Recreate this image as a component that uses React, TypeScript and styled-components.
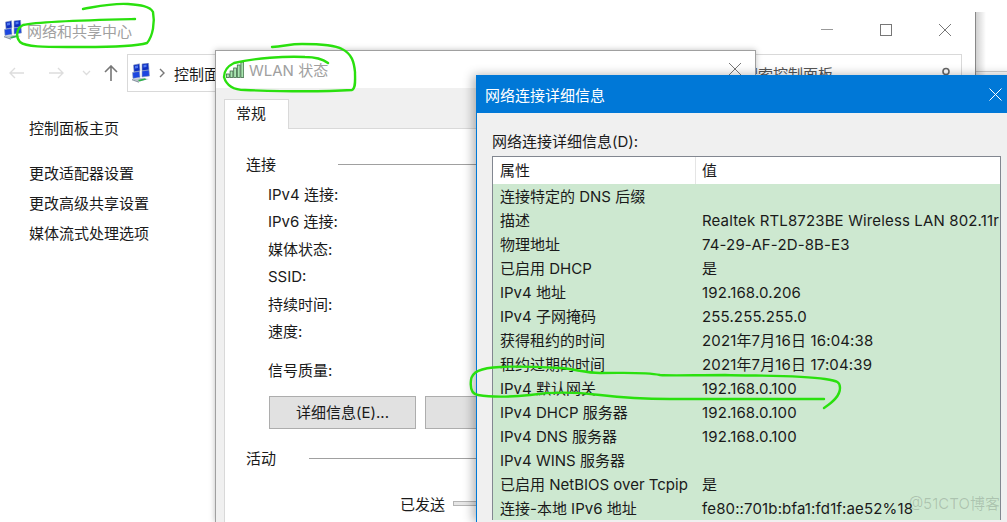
import React from "react";
import styled, { createGlobalStyle } from "styled-components";

const FONT = `Inter, "Noto Sans CJK SC", sans-serif`;

const rows: [string, string][] = [
  ["连接特定的 DNS 后缀", ""],
  ["描述", "Realtek RTL8723BE Wireless LAN 802.11r"],
  ["物理地址", "74-29-AF-2D-8B-E3"],
  ["已启用 DHCP", "是"],
  ["IPv4 地址", "192.168.0.206"],
  ["IPv4 子网掩码", "255.255.255.0"],
  ["获得租约的时间", "2021年7月16日 16:04:38"],
  ["租约过期的时间", "2021年7月16日 17:04:39"],
  ["IPv4 默认网关", "192.168.0.100"],
  ["IPv4 DHCP 服务器", "192.168.0.100"],
  ["IPv4 DNS 服务器", "192.168.0.100"],
  ["IPv4 WINS 服务器", ""],
  ["已启用 NetBIOS over Tcpip", "是"],
  ["连接-本地 IPv6 地址", "fe80::701b:bfa1:fd1f:ae52%18"],
];

// four blue screens on a grey and green base
const NetworkIcon = () => (
  <svg width="18" height="20" viewBox="0 0 18 20">
    <path d="M2 9L1.500 2l6-1.200.5 7z" fill="#0f2fc0" stroke="#8fa0c0" strokeWidth=".6" />
    <path d="M10 7.800V.9L16.500 0l.5 7z" fill="#0f2fc0" stroke="#8fa0c0" strokeWidth=".6" />
    <path d="M1 15.500L.5 9.500l7-1.200.5 6z" fill="#1c46e0" stroke="#8fa0c0" strokeWidth=".6" />
    <path d="M10 14V8l7-1 .5 6z" fill="#1c46e0" stroke="#8fa0c0" strokeWidth=".6" />
    <path d="M3 3l3-.6v2.500L3 5.600z" fill="#4f78f0" />
    <path d="M11.500 2l3-.5V4l-3 .5z" fill="#4f78f0" />
    <path d="M0 16l7 2.500 10-2.500-8-1z" fill="#b9c2cc" />
    <path d="M6 17l7-1.700 1.500 1.200-7 2z" fill="#2fb24a" />
    <path d="M0 16l7 2.500v1.200L0 17.200z" fill="#8b96a3" />
  </svg>
);

const SignalIcon = () => (
  <svg width="18" height="16" viewBox="0 0 18 16">
    {[0, 1, 2, 3, 4].map((i) => (
      <rect
        key={i}
        x={i * 3.6 + 0.5}
        y={12 - i * 3}
        width={2.8}
        height={3.5 + i * 3}
        fill="#a9e6b0"
        stroke="#3d6a45"
        strokeWidth="0.8"
      />
    ))}
  </svg>
);

const Sidebar = ["更改适配器设置", "更改高级共享设置", "媒体流式处理选项"];

const App = () => (
  <Desktop>
    <GlobalStyle />
    <BackWindowEdge />
    <MainWindow>
      <TitleBar>
        <NetworkIcon />
        <TitleText>网络和共享中心</TitleText>
        <WindowControls>
          <svg width="12" height="12" viewBox="0 0 12 12">
            <path d="M0 5.500h12" stroke="#999" />
          </svg>
          <svg width="12" height="12" viewBox="0 0 12 12">
            <rect x="0.5" y="0.5" width="11" height="11" fill="none" stroke="#777" />
          </svg>
          <svg width="12" height="12" viewBox="0 0 12 12">
            <path d="M0 0l12 12M12 0L0 12" stroke="#777" />
          </svg>
        </WindowControls>
      </TitleBar>
      <NavBar>
        <NavArrows>
          <svg width="16" height="12" viewBox="0 0 16 12">
            <path d="M1 6h14M6 1L1 6l5 5" fill="none" stroke="#ddd" strokeWidth="1.4" />
          </svg>
          <svg width="16" height="12" viewBox="0 0 16 12">
            <path d="M1 6h14M10 1l5 5-5 5" fill="none" stroke="#ddd" strokeWidth="1.4" />
          </svg>
          <svg width="9" height="6" viewBox="0 0 9 6">
            <path d="M1 1l3.500 3.500L8 1" fill="none" stroke="#ddd" strokeWidth="1.3" />
          </svg>
          <svg width="14" height="16" viewBox="0 0 14 16">
            <path d="M7 16V1M1 7l6-6 6 6" fill="none" stroke="#777" strokeWidth="1.6" />
          </svg>
        </NavArrows>
        <AddressBox>
          <NetworkIcon />
          <svg width="6" height="10" viewBox="0 0 6 10">
            <path d="M1 1l4 4-4 4" fill="none" stroke="#777" strokeWidth="1.4" />
          </svg>
          <span>控制面板</span>
        </AddressBox>
        <SearchBox>
          <span>搜索控制面板</span>
          <svg width="10" height="13" viewBox="0 0 10 13">
            <circle cx="5" cy="4.500" r="3" fill="none" stroke="#666" strokeWidth="1.6" />
            <path d="M5 8v4" stroke="#666" strokeWidth="1.6" />
          </svg>
        </SearchBox>
      </NavBar>
      <SideNav>
        <SideLink>控制面板主页</SideLink>
        <SideGroup>
          {Sidebar.map((item) => (
            <SideLink key={item}>{item}</SideLink>
          ))}
        </SideGroup>
      </SideNav>
    </MainWindow>

    <StatusDialog>
      <DialogHead>
        <SignalIcon />
        <StatusTitle>WLAN 状态</StatusTitle>
        <StatusClose width="12" height="12" viewBox="0 0 12 12">
          <path d="M0 0l12 12M12 0L0 12" stroke="#777" />
        </StatusClose>
      </DialogHead>
      <TabStrip>
        <Tab>常规</Tab>
      </TabStrip>
      <TabPanel>
        <GroupTitle $lineStart={92}>连接</GroupTitle>
        <InfoList>
          <InfoLabel>IPv4 连接:</InfoLabel>
          <InfoLabel>IPv6 连接:</InfoLabel>
          <InfoLabel>媒体状态:</InfoLabel>
          <InfoLabel>SSID:</InfoLabel>
          <InfoLabel>持续时间:</InfoLabel>
          <InfoLabel>速度:</InfoLabel>
          <InfoLabel $gap>信号质量:</InfoLabel>
        </InfoList>
        <ButtonRow>
          <PanelButton>详细信息(E)...</PanelButton>
          <PanelButton />
        </ButtonRow>
        <GroupTitle $lineStart={63}>活动</GroupTitle>
        <SentRow>
          <span>已发送</span>
          <SentBar />
        </SentRow>
      </TabPanel>
    </StatusDialog>

    <DetailDialog>
      <DetailHead>
        <span>网络连接详细信息</span>
        <svg width="13" height="13" viewBox="0 0 13 13">
          <path d="M0.5 0.5l12 12M12.500 0.5l-12 12" stroke="#fff" />
        </svg>
      </DetailHead>
      <DetailBody>
        <DetailLabel>网络连接详细信息(D):</DetailLabel>
        <ListBox>
          <ListHeader>
            <HeaderCell>属性</HeaderCell>
            <HeaderCell>值</HeaderCell>
          </ListHeader>
          {rows.map(([name, value]) => (
            <ListRow key={name}>
              <span>{name}</span>
              <RowValue>{value}</RowValue>
            </ListRow>
          ))}
        </ListBox>
      </DetailBody>
    </DetailDialog>

    <Scribbles width="1007" height="522" viewBox="0 0 1007 522">
      <path d="M83 9C100 6 112 3 128 4C140 5 150 6 153 12C155 22 153 36 147 43C130 48 90 47 67 47C45 47 26 47 20 42C15 36 17 28 23 25C40 21 90 20 135 19" />
      <path d="M272 47C285 46 290 44 302 44C318 44 335 45 342 49C352 54 354 62 355 72C355 80 356 88 352 90C320 92 270 91 245 90C232 90 226 84 224 77C224 70 228 66 234 63C255 58 285 56 305 57C315 57 324 60 328 63" />
      <path d="M824 408C833 402 840 396 840 388C840 382 838 381 825 379C800 375 760 376 725 375C695 375 670 376 660 375C645 372 630 373 600 373C585 373 575 369 560 368C540 367 515 366 500 367C480 368 472 372 471 380C470 388 472 394 478 395C490 397 510 397 530 395C550 392 575 392 600 395C625 398 645 399 670 399C720 399 780 399 824 399" />
    </Scribbles>
    <Watermark>@51CTO博客</Watermark>
  </Desktop>
);

export default App;

const GlobalStyle = createGlobalStyle`
  html, body {
    margin: 0;
    padding: 0;
    background: #fff;
  }
  body {
    font-family: ${FONT};
    font-size: 15px;
    color: #1a1a1a;
  }
`;

const Desktop = styled.div`
  position: relative;
  width: 1007px;
  height: 522px;
  overflow: hidden;
  background: #fff;
`;

const BackWindowEdge = styled.div`
  position: absolute;
  left: 975px;
  right: 0;
  top: 71px;
  height: 1px;
  background: #d0d0d0;
`;

const MainWindow = styled.div`
  position: absolute;
  left: 0;
  top: 12px;
  width: 976px;
  height: 510px;
  box-sizing: border-box;
  background: #fff;
  border-right: 1px solid #a8a8a8;
  display: flex;
  flex-direction: column;

  /* soft shadow falling to the right of the window */
  &::after {
    content: "";
    position: absolute;
    left: 100%;
    top: 0;
    bottom: 0;
    width: 11px;
    background: linear-gradient(to right, rgba(0, 0, 0, 0.2), rgba(0, 0, 0, 0));
  }
`;

const TitleBar = styled.div`
  height: 36px;
  flex: none;
  display: flex;
  align-items: center;
  padding-left: 4px;
`;

const TitleText = styled.span`
  margin-left: 5px;
  color: #a0a0a0;
`;

const WindowControls = styled.div`
  margin-left: auto;
  display: flex;
  gap: 47px;
  margin-right: 24px;
`;

const NavBar = styled.div`
  height: 38px;
  flex: none;
  margin-top: 6px;
  display: flex;
  align-items: center;
`;

const NavArrows = styled.div`
  width: 127px;
  flex: none;
  display: flex;
  align-items: center;
  padding-left: 9px;
  box-sizing: border-box;

  svg:nth-child(2) {
    margin-left: 23px;
  }
  svg:nth-child(3) {
    margin-left: 18px;
  }
  svg:nth-child(4) {
    margin-left: 13px;
  }
`;

const AddressBox = styled.div`
  flex: 1;
  height: 38px;
  box-sizing: border-box;
  border: 1px solid #d9d9d9;
  border-right: none;
  display: flex;
  align-items: center;
  gap: 9px;
  padding-left: 4px;
  white-space: nowrap;
`;

const SearchBox = styled.div`
  flex: none;
  width: 220px;
  height: 38px;
  margin-right: 13px;
  box-sizing: border-box;
  border: 1px solid #d9d9d9;
  display: flex;
  align-items: center;
  justify-content: space-between;
  padding-right: 10px;
  color: #555;
`;

const SideNav = styled.nav`
  margin-top: 27px;
  padding-left: 29px;
  display: flex;
  flex-direction: column;
  gap: 25px;
`;

const SideGroup = styled.div`
  display: flex;
  flex-direction: column;
  gap: 10px;
`;

const SideLink = styled.div`
  height: 20px;
  line-height: 20px;
  color: #1a1a1a;
`;

const StatusDialog = styled.div`
  position: absolute;
  left: 215px;
  top: 50px;
  width: 541px;
  height: 472px;
  background: #f0f0f0;
  border: 1px solid #a0a0a0;
  border-bottom: none;
  box-sizing: border-box;
  box-shadow: 0 0 6px rgba(0, 0, 0, 0.25);
  display: flex;
  flex-direction: column;
`;

const DialogHead = styled.div`
  height: 37px;
  flex: none;
  background: #fff;
  display: flex;
  align-items: center;
  padding-left: 10px;
  position: relative;
`;

const StatusTitle = styled.span`
  margin-left: 5px;
  color: #a0a0a0;
`;

const StatusClose = styled.svg`
  position: absolute;
  right: 14px;
  top: 12px;
`;

const TabStrip = styled.div`
  height: 40px;
  flex: none;
  display: flex;
  align-items: flex-end;
  padding-left: 8px;
`;

const Tab = styled.div`
  width: 65px;
  height: 30px;
  box-sizing: border-box;
  background: #fff;
  border: 1px solid #d9d9d9;
  border-bottom: none;
  padding-left: 11px;
  line-height: 28px;
  margin-bottom: -1px;
  position: relative;
  z-index: 1;
`;

const TabPanel = styled.div`
  flex: 1;
  margin-left: 8px;
  background: #fff;
  border-left: 1px solid #d9d9d9;
  border-top: 1px solid #d9d9d9;
  padding: 26px 0 0 21px;
`;

const GroupTitle = styled.div<{ $lineStart: number }>`
  height: 20px;
  line-height: 20px;
  position: relative;

  &::after {
    content: "";
    position: absolute;
    left: ${(p) => p.$lineStart}px;
    right: 0;
    top: 9px;
    height: 1px;
    background: #a0a0a0;
  }
`;

const InfoList = styled.div`
  margin-top: 10px;
  padding-left: 22px;
  display: flex;
  flex-direction: column;
`;

const InfoLabel = styled.div<{ $gap?: boolean }>`
  height: 20px;
  line-height: 20px;
  margin-bottom: 7.45px;
  margin-top: ${(p) => (p.$gap ? "11px" : "0")};
`;

const ButtonRow = styled.div`
  display: flex;
  gap: 9px;
  margin: 8px 0 20px 23px;
`;

const PanelButton = styled.div`
  width: 147px;
  height: 33px;
  box-sizing: border-box;
  background: #e1e1e1;
  border: 1px solid #adadad;
  text-align: center;
  line-height: 31px;
`;

const SentRow = styled.div`
  margin-top: 24px;
  padding-left: 154px;
  display: flex;
  align-items: center;
  gap: 8px;
  height: 20px;
`;

const SentBar = styled.div`
  width: 40px;
  height: 3px;
  border: 1px solid #b4b4b4;
  background: #e6e6e6;
`;

const DetailDialog = styled.div`
  position: absolute;
  left: 476px;
  top: 75px;
  width: 540px;
  height: 447px;
  background: #f0f0f0;
  border-left: 1px solid #0078d7;
  box-shadow: -3px 0 10px rgba(0, 0, 0, 0.3);
  display: flex;
  flex-direction: column;
`;

const DetailHead = styled.div`
  height: 38px;
  flex: none;
  background: #0078d7;
  color: #fff;
  display: flex;
  align-items: center;
  padding-left: 8px;

  svg {
    margin-left: 384px;
    flex: none;
  }
`;

const DetailBody = styled.div`
  padding: 19px 0 0 15px;
`;

const DetailLabel = styled.div`
  height: 20px;
  line-height: 20px;
`;

const ListBox = styled.div`
  margin-top: 4px;
  width: 509px;
  box-sizing: border-box;
  border: 1px solid #828790;
  border-bottom: none;
  background: #cde8d0;
  white-space: nowrap;
  overflow: hidden;
`;

const ListHeader = styled.div`
  height: 27px;
  background: #fff;
  display: grid;
  grid-template-columns: 202px 1fr;
`;

const HeaderCell = styled.div`
  padding-left: 7px;
  line-height: 27px;

  & + & {
    border-left: 1px solid #e5e5e5;
    padding-left: 6px;
  }
`;

const ListRow = styled.div`
  height: 24px;
  line-height: 25px;
  display: grid;
  grid-template-columns: 202px 1fr;
  padding-left: 7px;
  color: #1a1a1a;
`;

const RowValue = styled.span`
  letter-spacing: 0.14px;
`;

const Scribbles = styled.svg`
  position: absolute;
  left: 0;
  top: 0;
  pointer-events: none;

  path {
    fill: none;
    stroke: #2ae00e;
    stroke-width: 2.4;
    stroke-linecap: round;
    stroke-linejoin: round;
  }
`;

const Watermark = styled.div`
  position: absolute;
  right: 7px;
  bottom: 9px;
  color: rgba(0, 0, 0, 0.16);
`;
